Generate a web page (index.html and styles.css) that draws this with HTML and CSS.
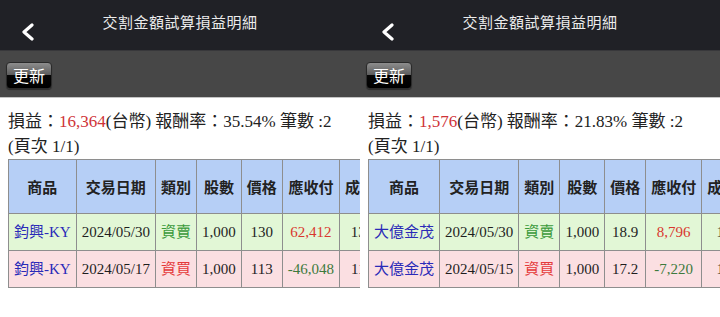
FILE: index.html
```html
<!DOCTYPE html>
<html lang="zh-Hant">
<head>
<meta charset="utf-8">
<title>交割金額試算損益明細</title>
<link rel="stylesheet" href="styles.css">
</head>
<body>
<div class="screens">
  <section class="screen">
    <header class="nav">
      <span class="back"><svg width="14" height="18" viewBox="0 0 14 18"><polyline points="11,2 3,9 11,16" fill="none" stroke="#fff" stroke-width="3.2" stroke-linecap="round" stroke-linejoin="round"/></svg></span>
      <h1 class="title">交割金額試算損益明細</h1>
    </header>
    <div class="toolbar"><button class="btn">更新</button></div>
    <div class="content">
      <div class="summary">損益：<span class="red">16,364</span>(台幣) 報酬率：35.54% 筆數 :2</div>
      <div class="summary page">(頁次 1/1)</div>
      <table class="grid">
        <thead>
          <tr><th>商品</th><th>交易日期</th><th>類別</th><th>股數</th><th>價格</th><th>應收付</th><th>成交價金</th></tr>
        </thead>
        <tbody>
          <tr class="sell"><td class="name">鈞興-KY</td><td>2024/05/30</td><td class="g">資賣</td><td>1,000</td><td>130</td><td class="r">62,412</td><td>130,000</td></tr>
          <tr class="buy"><td class="name">鈞興-KY</td><td>2024/05/17</td><td class="r2">資買</td><td>1,000</td><td>113</td><td class="g2">-46,048</td><td>113,000</td></tr>
        </tbody>
      </table>
    </div>
  </section>
  <section class="screen">
    <header class="nav">
      <span class="back"><svg width="14" height="18" viewBox="0 0 14 18"><polyline points="11,2 3,9 11,16" fill="none" stroke="#fff" stroke-width="3.2" stroke-linecap="round" stroke-linejoin="round"/></svg></span>
      <h1 class="title">交割金額試算損益明細</h1>
    </header>
    <div class="toolbar"><button class="btn">更新</button></div>
    <div class="content">
      <div class="summary">損益：<span class="red">1,576</span>(台幣) 報酬率：21.83% 筆數 :2</div>
      <div class="summary page">(頁次 1/1)</div>
      <table class="grid">
        <thead>
          <tr><th>商品</th><th>交易日期</th><th>類別</th><th>股數</th><th>價格</th><th>應收付</th><th>成交價金</th></tr>
        </thead>
        <tbody>
          <tr class="sell"><td class="name">大億金茂</td><td>2024/05/30</td><td class="g">資賣</td><td>1,000</td><td>18.9</td><td class="r">8,796</td><td>18,900</td></tr>
          <tr class="buy"><td class="name">大億金茂</td><td>2024/05/15</td><td class="r2">資買</td><td>1,000</td><td>17.2</td><td class="g2">-7,220</td><td>17,200</td></tr>
        </tbody>
      </table>
    </div>
  </section>
</div>
</body>
</html>
```

FILE: styles.css
```css
html, body {
  margin: 0;
  padding: 0;
  background: #fff;
}
.screens {
  display: flex;
  width: 720px;
  height: 317px;
  overflow: hidden;
}
.screen {
  width: 360px;
  flex: 0 0 360px;
  height: 317px;
  overflow: hidden;
  background: #fff;
}
.nav {
  position: relative;
  height: 51px;
  background: #202126;
  border-bottom: 1px solid #38383b;
  box-sizing: border-box;
}
.back {
  position: absolute;
  left: 21px;
  top: 23px;
  width: 14px;
  height: 18px;
}
.back svg { display: block; }
.title {
  margin: 0;
  padding-top: 11px;
  text-align: center;
  font-family: "Noto Sans CJK TC", "Liberation Sans", sans-serif;
  font-weight: 400;
  font-size: 15px;
  line-height: 22px;
  color: #ececec;
  letter-spacing: 0.5px;
}
.toolbar {
  height: 47px;
  background: #474747;
  border-bottom: 1px solid #c4c4c4;
  display: flex;
  align-items: center;
  padding-left: 6px;
  box-sizing: border-box;
}
.btn {
  width: 46px;
  height: 27px;
  margin-top: 3px;
  padding: 0;
  border: 1px solid #2a2a2a;
  border-radius: 4px;
  background: linear-gradient(to bottom, #8d8d8d 0%, #5c5c5c 48%, #060606 50%, #000 100%);
  color: #fff;
  font-family: "Noto Sans CJK TC", "Liberation Sans", sans-serif;
  font-size: 16px;
  line-height: 25px;
  box-shadow: 0 1px 1px rgba(0,0,0,0.4);
}
.content {
  padding: 11px 0 0 8px;
}
.summary {
  font-family: "Liberation Serif", "Noto Sans CJK TC", serif;
  font-size: 17px;
  line-height: 26px;
  color: #222;
  white-space: nowrap;
}
.summary.page {
  line-height: 24px;
}
.red { color: #cf3338; }
.grid {
  border-collapse: collapse;
  white-space: nowrap;
  font-family: "Liberation Serif", "Noto Sans CJK TC", serif;
  font-size: 15px;
  color: #1e1e1e;
}
.grid th, .grid td {
  border: 1px solid #8e8e8e;
  text-align: center;
  padding: 0 5px;
}
.grid th {
  height: 53px;
  background: #b6cff6;
  font-family: "Noto Sans CJK TC", "Liberation Sans", sans-serif;
  font-weight: 700;
  font-size: 15px;
  line-height: 20px;
  color: #222;
}
.grid td {
  height: 36px;
  line-height: 20px;
}
.sell td { background: #e2f7d6; }
.buy td { background: #fbdfe2; }
.grid td.name { color: #2a2ab8; }
.grid td.g { color: #3a9a3a; }
.grid td.r2 { color: #e53a3a; }
.grid td.r { color: #d9372f; }
.grid td.g2 { color: #3d7a3d; }
```
